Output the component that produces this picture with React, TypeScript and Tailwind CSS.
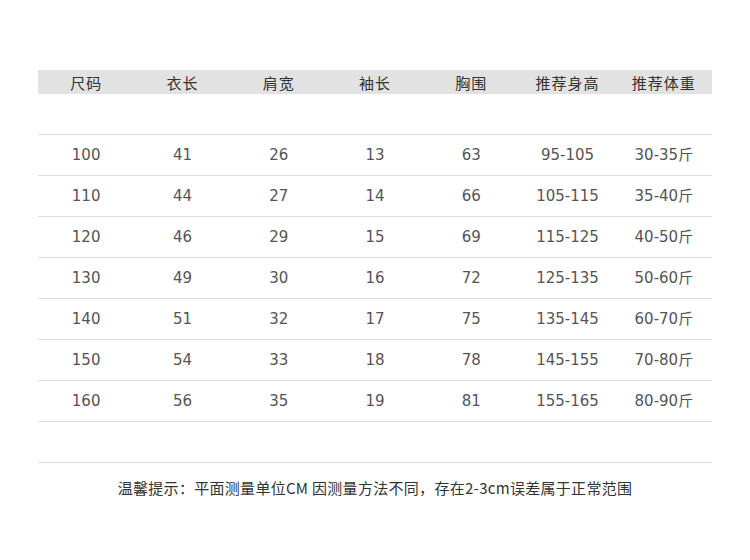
import React from "react";

const headers = ["尺码", "衣长", "肩宽", "袖长", "胸围", "推荐身高", "推荐体重"];

const rows = [
  ["100", "41", "26", "13", "63", "95-105", "30-35斤"],
  ["110", "44", "27", "14", "66", "105-115", "35-40斤"],
  ["120", "46", "29", "15", "69", "115-125", "40-50斤"],
  ["130", "49", "30", "16", "72", "125-135", "50-60斤"],
  ["140", "51", "32", "17", "75", "135-145", "60-70斤"],
  ["150", "54", "33", "18", "78", "145-155", "70-80斤"],
  ["160", "56", "35", "19", "81", "155-165", "80-90斤"],
];

const cjk = "font-[family-name:'Noto_Sans_CJK_SC',sans-serif]";
const num = "font-[family-name:'DejaVu_Sans','Noto_Sans_CJK_SC',sans-serif]";

const App = () => {
  return (
    <div className="w-[750px] h-[560px] bg-white pt-[70px]">
      <div className="ml-[38px] w-[674px]">
        <div className={`grid grid-cols-7 h-[24px] bg-[#e2e2e2] items-center text-[15px] text-[#333] ${cjk}`}>
          {headers.map((h) => (
            <div key={h} className="text-center tracking-[1px] leading-none">
              {h}
            </div>
          ))}
        </div>
        <div className="h-[41px] border-b border-[#dcdcdc]"></div>
        {rows.map((r) => (
          <div
            key={r[0]}
            className={`grid grid-cols-7 h-[41px] items-center border-b border-[#dcdcdc] text-[15px] text-[#555] ${num}`}
          >
            {r.map((c, i) => (
              <div key={i} className="text-center">
                {c}
              </div>
            ))}
          </div>
        ))}
        <div className="h-[41px] border-b border-[#dcdcdc]"></div>
      </div>
      <p className={`mt-[14px] text-center text-[15px] tracking-[0.3px] text-[#333] ${cjk}`}>
        温馨提示：平面测量单位CM 因测量方法不同，存在2-3cm误差属于正常范围
      </p>
    </div>
  );
};

export default App;
